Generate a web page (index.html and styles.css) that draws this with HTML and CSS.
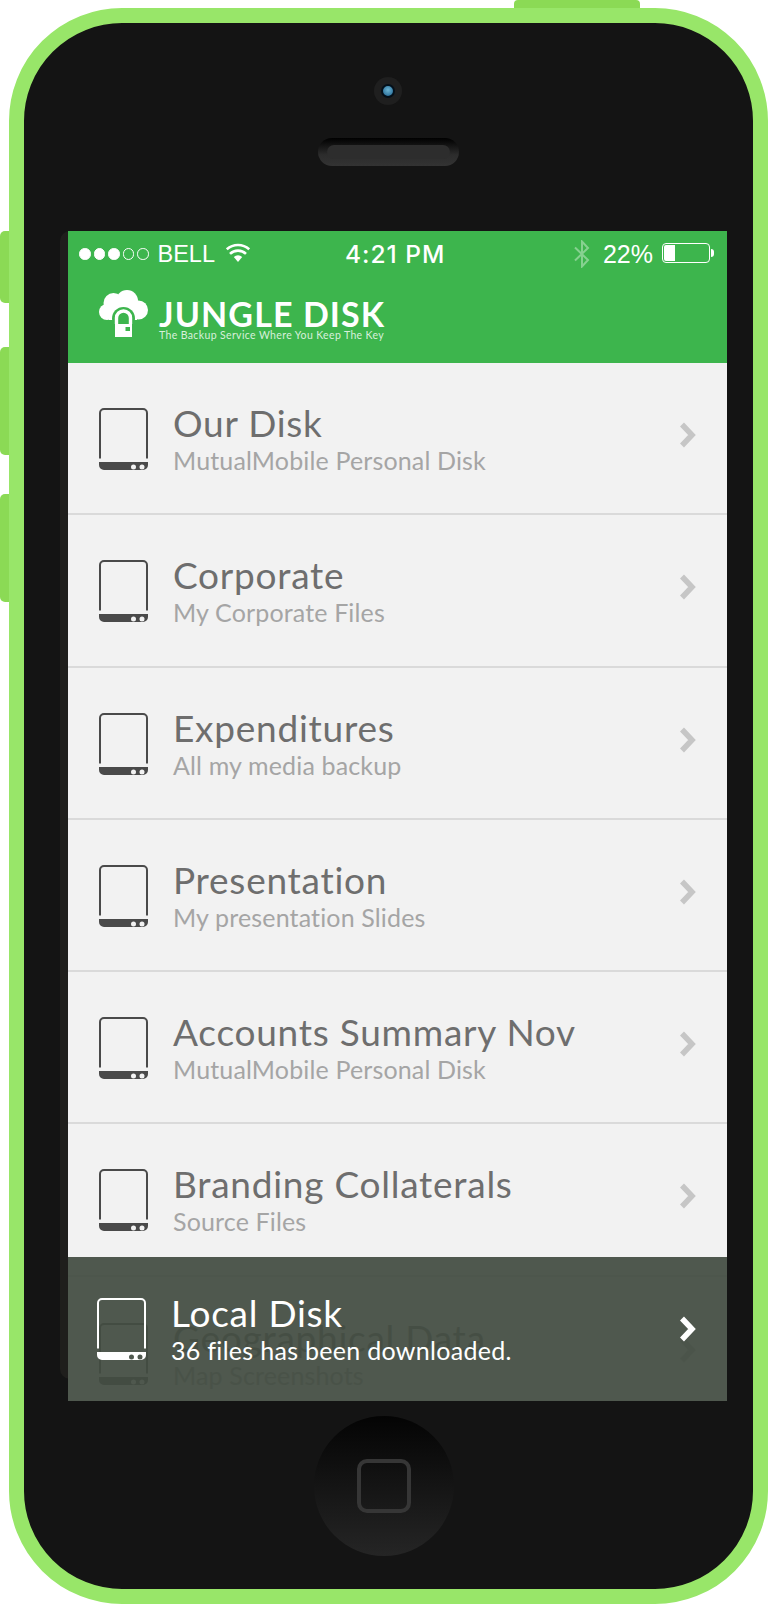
FILE: index.html
```html
<!DOCTYPE html>
<html lang="en">
<head>
<meta charset="utf-8">
<title>Jungle Disk</title>
<link rel="stylesheet" href="styles.css">
</head>
<body>
<div class="phone">
  <span class="btn btn-top"></span>
  <span class="btn btn-a"></span>
  <span class="btn btn-b"></span>
  <span class="btn btn-c"></span>
  <span class="bezel-strip"></span>
  <div class="camera"><span class="lens"></span></div>
  <div class="speaker"><span class="grille"></span></div>
  <main class="screen">
    <header class="head">
      <div class="status">
        <div class="st-left">
          <span class="dots"><i class="on"></i><i class="on"></i><i class="on"></i><i></i><i></i></span>
          <span class="carrier">BELL</span>
          <svg class="wifi" viewBox="0 0 24 19" width="24" height="19"><path d="M12 19 7.800 14a6.200 6.200 0 0 1 8.400 0Z" fill="#fff"/><path d="M4 10.900a11.500 11.500 0 0 1 16 0M.8 6.400a16.500 16.500 0 0 1 22.400 0" fill="none" stroke="#fff" stroke-width="2.600"/></svg>
        </div>
        <span class="time">4:21 PM</span>
        <div class="st-right">
          <svg class="bt" viewBox="0 0 16 28" width="16" height="28"><path d="M1 7.500 14 20 8 26.500V1.500L14 8 1 20.500" fill="none" stroke="#fff" stroke-opacity=".38" stroke-width="2"/></svg>
          <span class="pct">22%</span>
          <span class="battery"><span class="charge"></span></span>
        </div>
      </div>
      <div class="brand">
        <svg class="cloud" viewBox="0 0 49 47" width="49" height="47">
          <g fill="#fff">
            <circle cx="14.500" cy="13" r="10"/>
            <circle cx="28" cy="11" r="11"/>
            <circle cx="39.500" cy="20" r="9.500"/>
            <circle cx="8" cy="22" r="8"/>
            <rect x="10" y="12" width="28" height="18"/>
          </g>
          <circle cx="24.500" cy="28.500" r="11.500" fill="#3db54d"/>
          <rect x="13" y="30" width="23" height="6" fill="#3db54d"/>
          <path d="M17.500 34v-6a7 7 0 0 1 14 0V34" fill="none" stroke="#fff" stroke-width="3.400"/>
          <path d="M16 34h17v13H16Z" fill="#fff"/>
          <rect x="26.500" y="37" width="4.500" height="4" fill="#3db54d"/>
        </svg>
        <div class="word">
          <span class="name">JUNGLE DISK</span>
          <span class="tag">The Backup Service Where You Keep The Key</span>
        </div>
      </div>
    </header>
    <section class="list">
      <a class="row"><svg class="disk"><use href="#disk"/></svg><span class="txt"><b>Our Disk</b><small>MutualMobile Personal Disk</small></span><svg class="chev"><use href="#chev"/></svg></a>
      <a class="row"><svg class="disk"><use href="#disk"/></svg><span class="txt"><b>Corporate</b><small>My Corporate Files</small></span><svg class="chev"><use href="#chev"/></svg></a>
      <a class="row"><svg class="disk"><use href="#disk"/></svg><span class="txt"><b>Expenditures</b><small>All my media backup</small></span><svg class="chev"><use href="#chev"/></svg></a>
      <a class="row"><svg class="disk"><use href="#disk"/></svg><span class="txt"><b>Presentation</b><small>My presentation Slides</small></span><svg class="chev"><use href="#chev"/></svg></a>
      <a class="row"><svg class="disk"><use href="#disk"/></svg><span class="txt"><b>Accounts Summary Nov</b><small>MutualMobile Personal Disk</small></span><svg class="chev"><use href="#chev"/></svg></a>
      <a class="row"><svg class="disk"><use href="#disk"/></svg><span class="txt"><b>Branding Collaterals</b><small>Source Files</small></span><svg class="chev"><use href="#chev"/></svg></a>
      <a class="row"><svg class="disk"><use href="#disk"/></svg><span class="txt"><b>Geographical Data</b><small>Map Screenshots</small></span><svg class="chev"><use href="#chev"/></svg></a>
    </section>
    <aside class="banner">
      <svg class="disk"><use href="#disk"/></svg>
      <span class="txt"><b>Local Disk</b><small>36 files has been downloaded.</small></span>
      <svg class="chev"><use href="#chev"/></svg>
    </aside>
  </main>
  <div class="home"><span class="square"></span></div>
</div>
<svg class="defs" width="0" height="0">
  <symbol id="disk" viewBox="0 0 49 62">
    <path d="M1 50.500V5a4 4 0 0 1 4-4h39a4 4 0 0 1 4 4v45.500" fill="none" stroke="currentColor" stroke-width="2"/>
    <path fill-rule="evenodd" d="M0 54h49v3a5 5 0 0 1-5 5H5a5 5 0 0 1-5-5Zm34.500 2.500a2.500 2.500 0 1 0 0 5 2.500 2.500 0 0 0 0-5Zm8.500 0a2.500 2.500 0 1 0 0 5 2.500 2.500 0 0 0 0-5Z" fill="currentColor"/>
  </symbol>
  <symbol id="chev" viewBox="0 0 18 28">
    <path d="M3 3.500 13 14 3 24.500" fill="none" stroke="currentColor" stroke-width="5.500"/>
  </symbol>
</svg>
</body>
</html>
```
FILE: styles.css
```css
* { box-sizing: border-box; }
html, body { margin: 0; padding: 0; background: #fff; }
body { width: 768px; height: 1604px; overflow: hidden; }
.phone {
  position: relative;
  margin: 8px 0 0 9px;
  width: 759px;
  height: 1596px;
  background: #141414;
  border: 15px solid #98e669;
  border-radius: 113px;
  display: flex;
  flex-direction: column;
  align-items: flex-start;
}
.btn { position: absolute; background: #8bda55; }
.btn-top { left: 490px; top: -23px; width: 126px; height: 8px; border-radius: 4px 4px 0 0; }
.btn-a, .btn-b, .btn-c { left: -24px; width: 9px; border-radius: 5px 0 0 5px; }
.btn-a { top: 208px; height: 72px; }
.btn-b { top: 324px; height: 108px; }
.btn-c { top: 471px; height: 108px; }
.bezel-strip { position: absolute; left: 36px; top: 208px; width: 20px; height: 1148px; background: #1f1e1c; border-radius: 10px 0 0 10px; }
.camera { margin: 54px 0 0 350px; width: 28px; height: 28px; border-radius: 50%; background: #1f1f1f; display: flex; align-items: center; justify-content: center; }
.lens { width: 14px; height: 14px; border-radius: 50%; border: 2px solid #04101a; background: radial-gradient(circle at 50% 40%, #6db5d3, #1b5f8d); }
.speaker { margin: 33px 0 0 294px; width: 141px; height: 28px; border-radius: 14px; background: linear-gradient(#000, #2c2c2c 60%, #333); padding: 7px 9px; }
.grille { display: block; height: 14px; border-radius: 7px; background: #2d2d2d; }
.screen { position: relative; z-index: 1; margin: 65px 0 0 44px; width: 659px; height: 1170px; overflow: hidden; background: #f2f2f2; font-family: Lato, "Open Sans", sans-serif; }
.head { height: 132px; background: #3db54d; color: #fff; padding-top: 8px; }
.status { display: grid; grid-template-columns: 277px auto 1fr; align-items: center; height: 26px; font-family: "Liberation Sans", Arial, sans-serif; font-size: 23.500px; }
.st-left { display: flex; align-items: center; padding-left: 11px; }
.dots { display: flex; gap: 3px; }
.dots i { width: 11.500px; height: 11.500px; border-radius: 50%; border: 1px solid #fff; }
.dots i.on { background: #fff; }
.carrier { margin-left: 9px; }
.wifi { margin: -3px 0 0 11px; }
.time { font-family: Inter, "Liberation Sans", sans-serif; font-size: 24.500px; font-weight: 500; letter-spacing: 1px; }
.st-right { display: flex; align-items: center; justify-content: flex-end; padding-right: 13px; }
.bt { margin-top: -1px; }
.pct { margin-left: 13px; font-size: 25px; }
.battery { position: relative; margin: -2px 4px 0 9px; width: 48px; height: 20px; border: 1px solid #fff; border-radius: 4px; padding: 1px; }
.battery::after { content: ""; position: absolute; right: -5px; top: 5px; width: 3px; height: 8px; background: #fff; border-radius: 0 3px 3px 0; }
.charge { display: block; width: 11px; height: 16px; background: #fff; border-radius: 2px 0 0 2px; }
.brand { display: flex; margin: 25px 0 0 31px; }
.word { margin: 8px 0 0 11px; display: flex; flex-direction: column; }
.name { font-size: 34px; font-weight: 700; line-height: 31px; letter-spacing: 1.100px; white-space: nowrap; }
.tag { font-size: 10.500px; line-height: 12px; color: #d8f0dc; white-space: nowrap; letter-spacing: .37px; }
.list { display: flex; flex-direction: column; }
.row { display: flex; align-items: center; height: 152.250px; padding: 0 31px; border-bottom: 2px solid #dadada; color: #4a4a4a; }
.row:last-child { border-bottom: 0; }
.row .chev { color: #c6c6c6; margin-bottom: 6px; }
.disk { width: 49px; height: 62px; flex: none; margin-top: 2px; }
.txt { display: flex; flex-direction: column; margin-left: 25px; flex: 1; padding-top: 2px; }
.txt b { font-weight: 400; font-size: 37px; line-height: 42px; letter-spacing: .75px; color: #6e6e6e; white-space: nowrap; }
.txt small { font-size: 25px; line-height: 32px; letter-spacing: .15px; color: #a5a5a5; white-space: nowrap; }
.chev { width: 18px; height: 28px; flex: none; margin-right: -1px; }
.banner { position: absolute; left: 0; right: 0; top: 1026px; height: 144px; background: rgba(66, 76, 65, .935); display: flex; align-items: center; padding: 0 31px 0 29px; color: #fff; }
.banner .disk { margin-top: 0; }
.banner .txt { padding-top: 0; }
.banner .txt b { color: #fff; }
.banner .txt small { color: #fff; letter-spacing: .3px; }
.home { margin: 15px 0 0 290px; width: 140px; height: 140px; border-radius: 50%; background: linear-gradient(#040404, #252525); display: flex; align-items: center; justify-content: center; }
.square { width: 54px; height: 54px; border: 4px solid #363636; border-radius: 10px; }
.defs { position: absolute; }
```
